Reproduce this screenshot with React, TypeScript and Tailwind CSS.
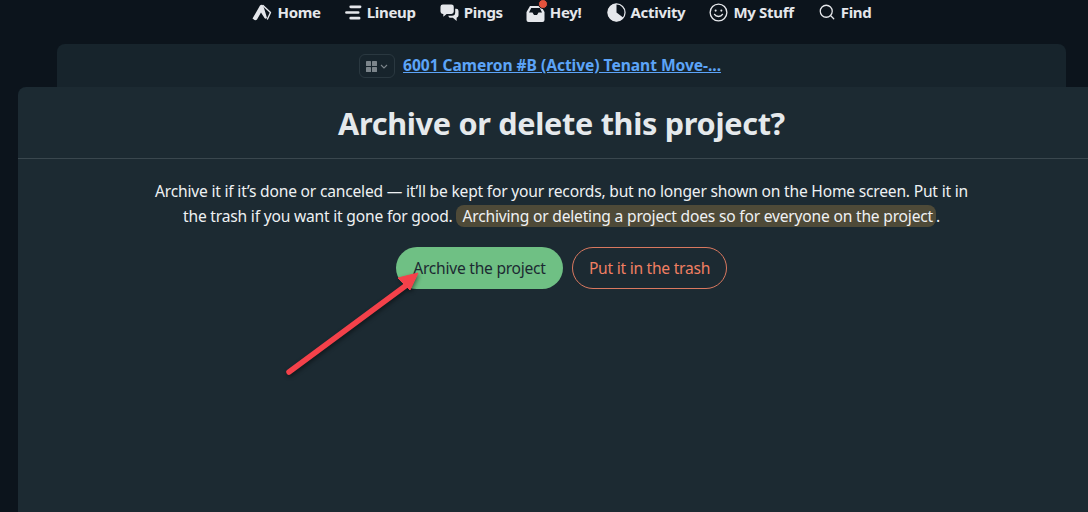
import { Search } from 'lucide-react';

const font = { fontFamily: '"Noto Sans", "Open Sans", sans-serif' };

function HomeIcon() {
  return (
    <svg viewBox="0 0 20 20" className="w-5 h-5">
      {/* solid A on the left, thin roof line on the right */}
      <path d="M0.5 16.5 L8 3.5 Q9.5 2 11 3.5 L12 6 L15 16 Q13.5 17.5 12.5 16 L9 10.5 L5 17.5 Q4 18.5 2.5 18 Z" fill="#e5e7eb" />
      <path d="M11 3.5 L18.5 10.5 L15.5 17" fill="none" stroke="#e5e7eb" strokeWidth="1.4" strokeLinejoin="round" strokeLinecap="round" />
    </svg>
  );
}

function LineupIcon() {
  return (
    <svg viewBox="0 0 18 18" className="w-[17px] h-[17px]" stroke="#e5e7eb" strokeWidth="2.8" strokeLinecap="round">
      <path d="M6 3 H16 M1.5 9 H14 M6 15 H15" />
    </svg>
  );
}

function PingsIcon() {
  return (
    <svg viewBox="0 0 20 20" className="w-[19px] h-[19px]" fill="#e5e7eb">
      <path d="M3 1.5 H12 A2.5 2.5 0 0 1 14.5 4 V9 A2.5 2.5 0 0 1 12 11.5 H7 L3.5 14.5 V11.5 H3 A2.5 2.5 0 0 1 .5 9 V4 A2.5 2.5 0 0 1 3 1.5 Z" />
      <path d="M16 6 H17 A2.5 2.5 0 0 1 19.5 8.5 V13 A2.5 2.5 0 0 1 17.5 15.5 V19 L13.5 15.5 H10 L8.5 13.5 H12.5 A3.5 3.5 0 0 0 16 10 Z" />
    </svg>
  );
}

function HeyIcon() {
  return (
    <div className="relative w-[19px] h-[20px]">
      <svg viewBox="0 0 19 20" className="w-[19px] h-[20px]">
        <path fillRule="evenodd" fill="#e5e7eb" d="M4 4 H15 L18.5 10 V18 A2 2 0 0 1 16.5 20 H2.5 A2 2 0 0 1 .5 18 V10 Z M5.2 6 L3 10.5 H6.5 L8 13 H11 L12.5 10.5 H16 L13.8 6 Z" />
      </svg>
      <span className="absolute -top-[3px] right-[-3px] w-[10px] h-[10px] rounded-full border border-[#0c141c] bg-[#e5533d]" />
    </div>
  );
}

function ActivityIcon() {
  return (
    <svg viewBox="0 0 20 20" className="w-[19px] h-[19px]">
      <circle cx="10" cy="10" r="9" fill="none" stroke="#e5e7eb" strokeWidth="1.3" />
      <path d="M10 .8 A9.2 9.2 0 1 0 17.3 15.6 L10 10 Z" fill="#e5e7eb" />
    </svg>
  );
}

function SmileIcon() {
  return (
    <svg viewBox="0 0 20 20" className="w-[19px] h-[19px]" fill="none" stroke="#e5e7eb" strokeWidth="1.4" strokeLinecap="round">
      <circle cx="10" cy="10" r="8.8" />
      <circle cx="7" cy="8" r="1.1" fill="#e5e7eb" stroke="none" />
      <circle cx="13" cy="8" r="1.1" fill="#e5e7eb" stroke="none" />
      <path d="M5.8 12 C7.5 15 12.5 15 14.2 12" />
    </svg>
  );
}

function NavItem({ icon, label, className }: { icon: React.ReactNode; label: string; className: string }) {
  return (
    <div className={`flex items-center gap-[5px] ${className}`}>
      {icon}
      <span className="text-[15px] font-bold text-[#e5e7eb] tracking-[-0.3px]">{label}</span>
    </div>
  );
}

export default function App() {
  return (
    <div className="relative w-[1088px] h-[512px] overflow-hidden bg-[#0c141c] flex flex-col" style={font}>
      {/* Top nav */}
      <nav className="h-[44px] flex justify-center pt-[2px] pl-[36px]">
        <div className="flex h-[20px] items-center">
          <NavItem icon={<HomeIcon />} label="Home" className="mr-[24px]" />
          <NavItem icon={<LineupIcon />} label="Lineup" className="mr-[24px]" />
          <NavItem icon={<PingsIcon />} label="Pings" className="mr-[23px]" />
          <NavItem icon={<HeyIcon />} label="Hey!" className="mr-[25px]" />
          <NavItem icon={<ActivityIcon />} label="Activity" className="mr-[24px]" />
          <NavItem icon={<SmileIcon />} label="My Stuff" className="mr-[24px]" />
          <NavItem icon={<Search size={18} color="#e5e7eb" strokeWidth={1.7} />} label="Find" className="" />
        </div>
      </nav>

      {/* Breadcrumb card */}
      <div className="ml-[57px] mr-[22px] h-[43px] rounded-t-lg bg-[#17242c] flex items-center justify-center gap-[8px] pt-[1px] pr-[43px]">
        <div className="w-[36px] h-[24px] rounded-md border border-[#2a3840] flex items-center justify-center gap-[3px]">
          <svg viewBox="0 0 11 11" className="w-[11px] h-[11px]" fill="#7c858b">
            <rect x="0" y="0" width="5" height="5" rx="0.6" />
            <rect x="6" y="0" width="5" height="5" rx="0.6" />
            <rect x="0" y="6" width="5" height="5" rx="0.6" />
            <rect x="6" y="6" width="5" height="5" rx="0.6" />
          </svg>
          <svg viewBox="0 0 8 5" className="w-[8px] h-[5px]" fill="none" stroke="#7c858b" strokeWidth="1.1">
            <path d="M1 1 L4 4 L7 1" />
          </svg>
        </div>
        <a className="text-[15.6px] font-bold text-[#5ca4f8] underline tracking-[-0.05px]">6001 Cameron #B (Active) Tenant Move-...</a>
      </div>

      {/* Main card runs past the right edge of the window */}
      <main className="ml-[18px] w-[1087px] flex-1 rounded-tl-lg bg-[#1c2a32] flex flex-col items-center">
        <h1 className="w-full h-[72px] border-b border-[#3a474e] flex items-center justify-center pt-[2px] text-[30.6px] font-bold text-[#e5e9ec] tracking-[-0.3px]">
          Archive or delete this project?
        </h1>
        <p className="mt-[20px] w-[830px] text-center text-[15.6px] leading-[25px] text-[#eef1f3] tracking-[-0.2px]">
          Archive it if it’s done or canceled — it’ll be kept for your records, but no longer shown on the Home screen. Put it in the trash if you want it gone for good.{' '}
          <span className="bg-[#4e4a38] rounded-lg pl-[6px] pr-[3px]">Archiving or deleting a project does so for everyone on the project</span>.
        </p>
        <div className="mt-[18px] flex gap-[9px]">
          <button className="w-[167px] h-[42px] pt-[2px] rounded-full bg-[#6fc084] text-[#1c2a32] text-[15.6px] tracking-[-0.25px]">Archive the project</button>
          <button className="w-[155px] h-[42px] pt-[2px] rounded-full border border-[#d9785f] text-[#f07f62] text-[15.6px] tracking-[-0.25px]">Put it in the trash</button>
        </div>
      </main>

      {/* Annotation arrow */}
      <svg className="absolute left-0 top-0 w-[1088px] h-[512px] pointer-events-none" viewBox="0 0 1088 512">
        <g style={{ filter: 'drop-shadow(1px 2px 2px rgba(0,0,0,0.45))' }}>
          <path d="M289 372 L408 284" stroke="#f4414a" strokeWidth="5.5" strokeLinecap="round" fill="none" />
          <path d="M418 273 L398 278 L410 290 Z" fill="#f4414a" stroke="#f4414a" strokeWidth="1" strokeLinejoin="round" />
        </g>
      </svg>
    </div>
  );
}
